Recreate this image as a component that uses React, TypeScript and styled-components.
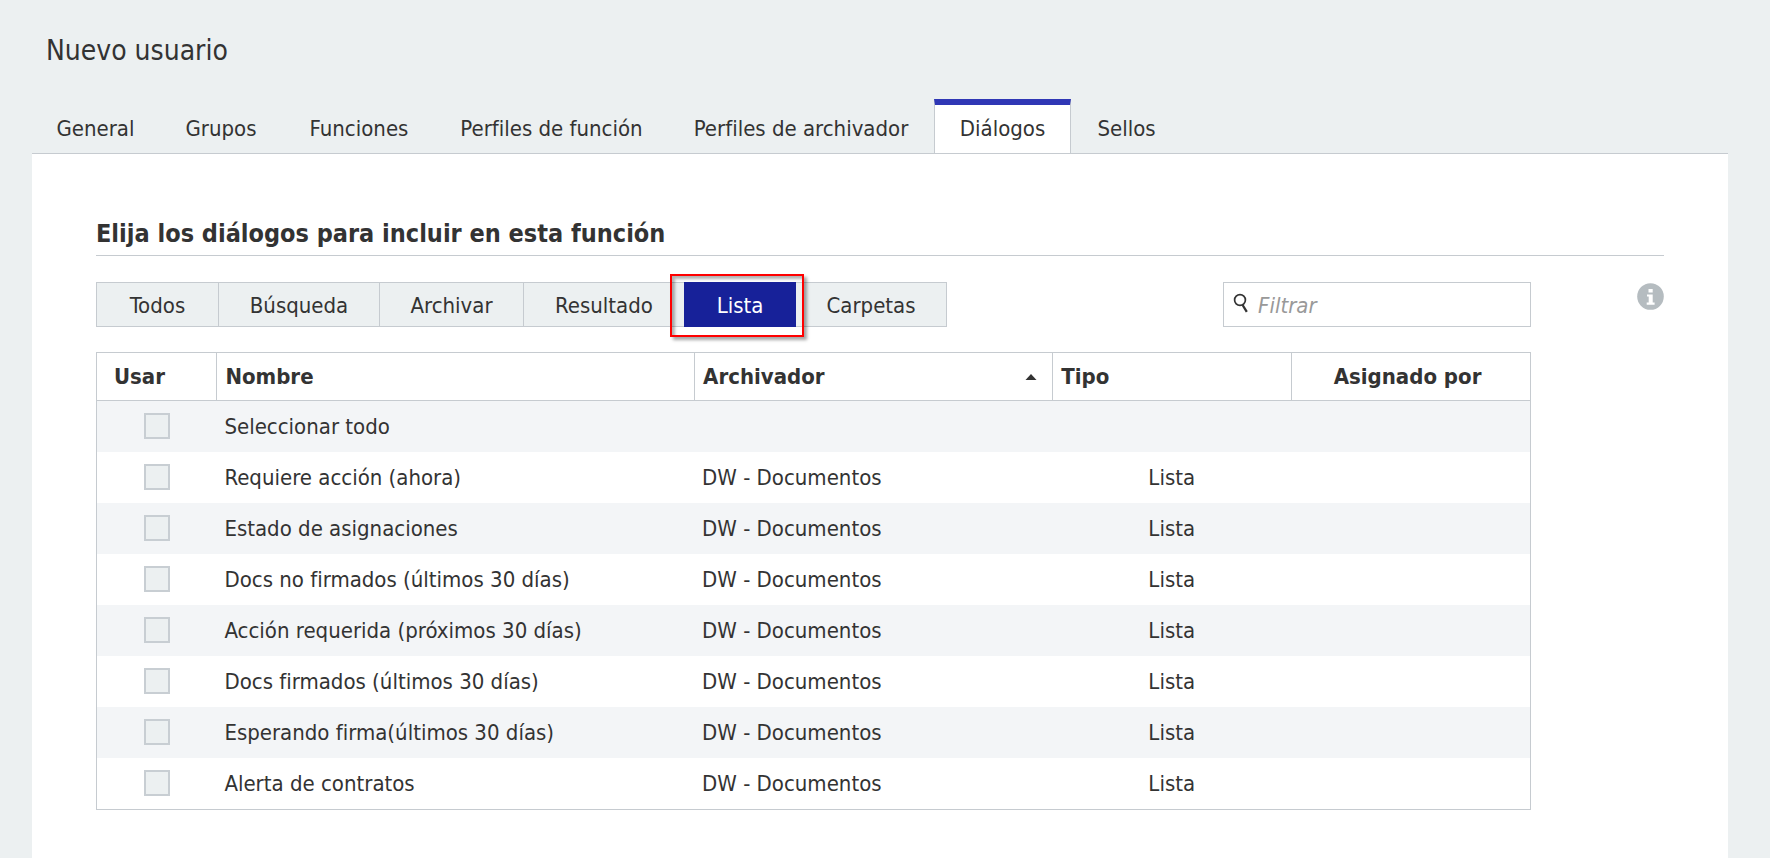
import React, { useState } from "react";
import styled, { createGlobalStyle } from "styled-components";

const GlobalStyle = createGlobalStyle`
  *, *::before, *::after { box-sizing: border-box; }
  body {
    margin: 0;
    background: #ecf0f1;
    color: #333333;
    font-family: "DejaVu Sans Condensed", "DejaVu Sans", Tahoma, sans-serif;
    font-stretch: condensed;
    font-variant-ligatures: none;
    font-size: 22px;
    line-height: 26px;
  }
  button, input { font: inherit; color: inherit; font-variant-ligatures: none; }
`;

const Page = styled.main`
  display: flex;
  flex-direction: column;
  min-height: 100vh;
  padding: 33px 42px 0 32px;
`;

const Title = styled.h1`
  margin: 0 0 30px;
  padding-left: 14px;
  font-size: 28px;
  font-weight: 400;
  line-height: 36px;
`;

const TabBar = styled.nav`
  display: flex;
`;

const Tab = styled.button<{ $active: boolean; $width: number }>`
  width: ${(p) => p.$width}px;
  height: 54px;
  padding: 0;
  border: 1px solid ${(p) => (p.$active ? "#c6cbd0" : "transparent")};
  border-top: 6px solid ${(p) => (p.$active ? "#2f37b5" : "transparent")};
  border-bottom: 0;
  background: ${(p) => (p.$active ? "#ffffff" : "transparent")};
  white-space: nowrap;
  cursor: pointer;
`;

const Panel = styled.section`
  flex: 1;
  padding: 64px 64px 48px;
  border-top: 1px solid #c6cbd0;
  background: #ffffff;
`;

const SectionTitle = styled.h2`
  margin: 0 0 26px;
  padding-bottom: 5px;
  border-bottom: 1px solid #c6cbd0;
  font-size: 25px;
  font-weight: 700;
  line-height: 32px;
`;

const Content = styled.div`
  display: grid;
  grid-template-columns: minmax(0, 1fr) 27px;
  column-gap: 106px;
  align-items: start;
`;

const Toolbar = styled.div`
  display: flex;
  justify-content: space-between;
  margin-bottom: 25px;
`;

const FilterGroup = styled.div`
  display: flex;
  height: 45px;
  border: 1px solid #c6cbd0;
  background: #ecf0f1;
`;

const FilterItem = styled.div<{ $divided: boolean; $width: number }>`
  position: relative;
  display: flex;
  width: ${(p) => p.$width}px;
  margin: -1px 0;
  border-right: ${(p) => (p.$divided ? "1px solid #c6cbd0" : "0")};
`;

const FilterButton = styled.button<{ $active: boolean }>`
  flex: 1;
  padding: 2px 0 0;
  border: solid ${(p) => (p.$active ? "#172199" : "#c6cbd0")};
  border-width: 1px 0;
  background: ${(p) => (p.$active ? "#172199" : "transparent")};
  color: ${(p) => (p.$active ? "#ffffff" : "inherit")};
  cursor: pointer;
`;

const Highlight = styled.span`
  position: absolute;
  z-index: 1;
  inset: -8px -8px -10px -14px;
  border: 2px solid #ff0000;
  box-shadow: 3px 3px 3px rgba(0, 0, 0, 0.35), inset 3px 3px 3px rgba(0, 0, 0, 0.3);
  pointer-events: none;
`;

const SearchBox = styled.label`
  display: flex;
  align-items: center;
  gap: 8px;
  width: 308px;
  height: 45px;
  padding: 0 8px;
  border: 1px solid #c6cbd0;
  background: #ffffff;
`;

const SearchInput = styled.input`
  flex: 1;
  min-width: 0;
  padding: 2px 0 0;
  border: 0;
  outline: 0;
  background: transparent;
  &::placeholder { color: #999999; font-style: italic; opacity: 1; }
`;

const InfoButton = styled.button`
  display: flex;
  margin-top: 1px;
  padding: 0;
  border: 0;
  background: transparent;
  cursor: pointer;
`;

const Table = styled.table`
  width: 100%;
  border: 1px solid #c6cbd0;
  border-collapse: separate;
  border-spacing: 0;
  table-layout: fixed;
`;

const Col = styled.col<{ $span: number }>`
  width: calc(100% * ${(p) => p.$span} / 12);
`;

const HeadCell = styled.th<{ $align?: string }>`
  height: 48px;
  padding: 0 15px 0 8px;
  border-bottom: 1px solid #c6cbd0;
  text-align: ${(p) => p.$align ?? "left"};
  font-weight: 700;
  &:first-child { padding-left: 17px; }
  &:not(:first-child) { border-left: 1px solid #c6cbd0; }
`;

const SortLabel = styled.span`
  display: flex;
  align-items: center;
  justify-content: space-between;
`;

const Row = styled.tr`
  &:nth-child(odd) { background: #f3f5f7; }
`;

const Cell = styled.td<{ $align?: string }>`
  height: 51px;
  padding: 0 8px;
  text-align: ${(p) => p.$align ?? "left"};
`;

const CheckCell = styled(Cell)`
  padding-bottom: 2px;
`;

const Check = styled.input`
  appearance: none;
  display: block;
  width: 26px;
  height: 26px;
  margin: 0 auto;
  border: 2px solid #c8ced3;
  background: #ecf0f1;
  cursor: pointer;
  &:checked { background: #172199; }
`;

const tabs = [
  { name: "General", width: 127 },
  { name: "Grupos", width: 124 },
  { name: "Funciones", width: 152 },
  { name: "Perfiles de función", width: 233 },
  { name: "Perfiles de archivador", width: 266 },
  { name: "Diálogos", width: 137 },
  { name: "Sellos", width: 111 },
];

const filters = [
  { name: "Todos", width: 122 },
  { name: "Búsqueda", width: 161 },
  { name: "Archivar", width: 144 },
  { name: "Resultado", width: 160 },
  { name: "Lista", width: 112 },
  { name: "Carpetas", width: 150 },
];

const rows = [
  { name: "Seleccionar todo", cabinet: "", type: "" },
  ...[
    "Requiere acción (ahora)",
    "Estado de asignaciones",
    "Docs no firmados (últimos 30 días)",
    "Acción requerida (próximos 30 días)",
    "Docs firmados (últimos 30 días)",
    "Esperando firma(últimos 30 días)",
    "Alerta de contratos",
  ].map((name) => ({ name, cabinet: "DW - Documentos", type: "Lista" })),
];

const SearchIcon = () => (
  <svg width="18" height="24" viewBox="0 0 18 24" fill="none" stroke="#333333" aria-hidden="true">
    <circle cx="8" cy="7" r="5.4" strokeWidth="1.7" />
    <path d="M10.6 12 L14.8 18.8" strokeWidth="2.3" />
  </svg>
);

const InfoIcon = () => (
  <svg width="27" height="27" viewBox="0 0 27 27" aria-hidden="true">
    <circle cx="13.5" cy="13.5" r="13.3" fill="#b5bcc0" />
    <path d="M11.5 6h4.2v3.6h-4.2zM10 11.4h5.7v8.1h1.9v2.2H9.7v-2.2h2v-5.9H10z" fill="#ffffff" />
  </svg>
);

const SortIcon = () => (
  <svg width="12" height="6" viewBox="0 0 12 6" aria-hidden="true">
    <path d="M6 0 11.5 6H.5z" fill="#333333" />
  </svg>
);

export default function App() {
  const [tab, setTab] = useState("Diálogos");
  const [filter, setFilter] = useState("Lista");

  return (
    <>
      <GlobalStyle />
      <Page>
        <Title>Nuevo usuario</Title>
        <TabBar>
          {tabs.map(({ name, width }) => (
            <Tab key={name} type="button" $width={width} $active={name === tab} onClick={() => setTab(name)}>
              {name}
            </Tab>
          ))}
        </TabBar>
        <Panel>
          <SectionTitle>Elija los diálogos para incluir en esta función</SectionTitle>
          <Content>
            <div>
              <Toolbar>
                <FilterGroup>
                  {filters.map(({ name, width }, i) => (
                    <FilterItem key={name} $width={width} $divided={i < 3}>
                      <FilterButton type="button" $active={name === filter} onClick={() => setFilter(name)}>
                        {name}
                      </FilterButton>
                      {name === "Lista" && <Highlight />}
                    </FilterItem>
                  ))}
                </FilterGroup>
                <SearchBox>
                  <SearchIcon />
                  <SearchInput type="text" placeholder="Filtrar" aria-label="Filtrar" />
                </SearchBox>
              </Toolbar>
              <Table>
                <colgroup>
                  {[1, 4, 3, 2, 2].map((span, i) => (
                    <Col key={i} $span={span} />
                  ))}
                </colgroup>
                <thead>
                  <tr>
                    <HeadCell scope="col">Usar</HeadCell>
                    <HeadCell scope="col">Nombre</HeadCell>
                    <HeadCell scope="col" aria-sort="ascending">
                      <SortLabel>
                        Archivador
                        <SortIcon />
                      </SortLabel>
                    </HeadCell>
                    <HeadCell scope="col">Tipo</HeadCell>
                    <HeadCell scope="col" $align="center">Asignado por</HeadCell>
                  </tr>
                </thead>
                <tbody>
                  {rows.map((row, i) => (
                    <Row key={row.name}>
                      <CheckCell>
                        <Check type="checkbox" id={`row-${i}`} />
                      </CheckCell>
                      <Cell>
                        <label htmlFor={`row-${i}`}>{row.name}</label>
                      </Cell>
                      <Cell>{row.cabinet}</Cell>
                      <Cell $align="center">{row.type}</Cell>
                      <Cell />
                    </Row>
                  ))}
                </tbody>
              </Table>
            </div>
            <InfoButton type="button" aria-label="Información">
              <InfoIcon />
            </InfoButton>
          </Content>
        </Panel>
      </Page>
    </>
  );
}
